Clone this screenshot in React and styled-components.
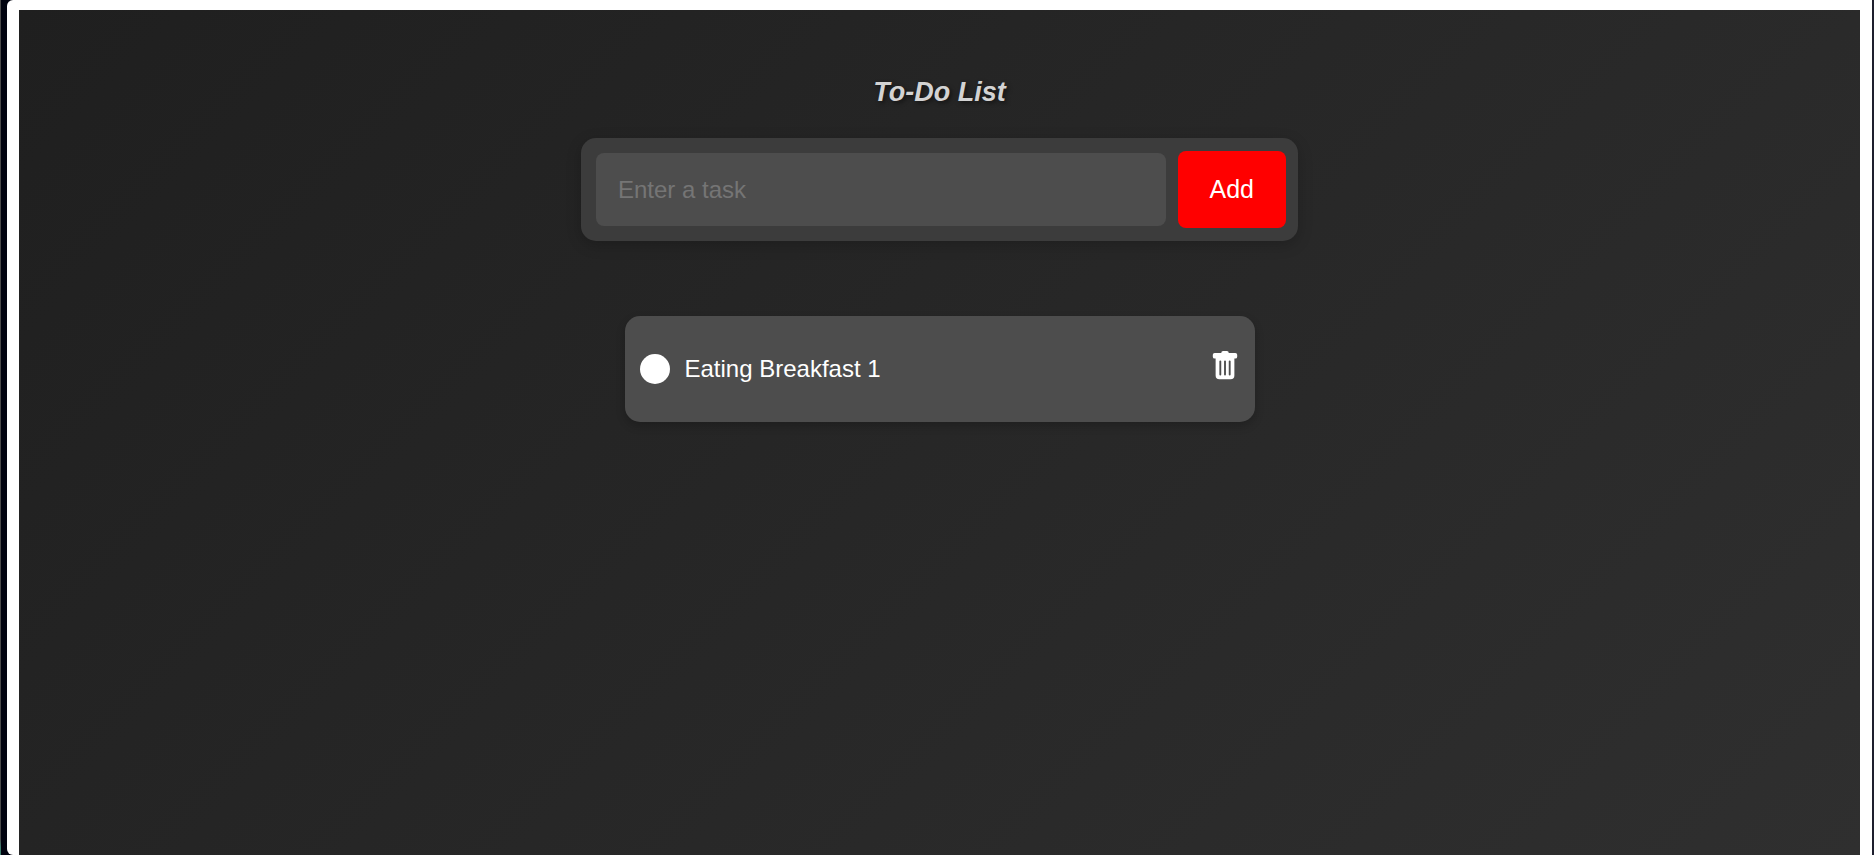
import React, { useState } from "react";
import styled, { createGlobalStyle } from "styled-components";
import { BsTrashFill } from "react-icons/bs";

const GlobalStyle = createGlobalStyle`
  *, *::before, *::after { box-sizing: border-box; }
  body {
    margin: 0;
    font-family: Arial, "Liberation Sans", sans-serif;
    color: #ffffff;
  }
`;

const Backdrop = styled.div`
  min-height: 100vh;
  display: flex;
  padding: 0 2px 0 6px;
  border-left: 1px solid #4a4a4a;
  border-image: linear-gradient(to bottom, #4a4a4a 98%, #3f7f70 99%) 1;
  background: linear-gradient(to right, #01030f 50%, #1e1f2e 50%);
`;

const Frame = styled.div`
  flex: 1;
  display: flex;
  padding: 10px 12px 0;
  background: #ffffff;
  border-radius: 6px 0 0 6px;
`;

const Page = styled.main`
  flex: 1;
  display: flex;
  flex-direction: column;
  align-items: center;
  padding: 66px 24px;
  background: linear-gradient(135deg, #1f1f1f, #2f2f2f);
`;

const Title = styled.h1`
  margin: 0;
  font-size: 27px;
  line-height: 32px;
  font-style: italic;
  color: #d3d3d3;
  text-shadow: 2px 2px 4px rgba(0, 0, 0, 0.5);
`;

const TaskForm = styled.form`
  width: 100%;
  max-width: 717px;
  display: flex;
  align-items: center;
  gap: 12px;
  margin-top: 30px;
  padding: 13px 12px 13px 15px;
  border-radius: 15px;
  background: #3c3c3c;
  box-shadow: 0 4px 15px rgba(0, 0, 0, 0.2);
`;

const TaskInput = styled.input`
  flex: 1;
  min-width: 0;
  height: 73px;
  padding: 0 22px;
  border: 0;
  border-radius: 8px;
  outline: 0;
  background: #4d4d4d;
  color: #ffffff;
  font: 24px Arial, "Liberation Sans", sans-serif;

  &::placeholder {
    color: #757575;
    opacity: 1;
  }
`;

const AddButton = styled.button`
  height: 77px;
  padding: 0 32px;
  border: 0;
  border-radius: 8px;
  background: #ff0000;
  color: #ffffff;
  font: 25px Arial, "Liberation Sans", sans-serif;
  cursor: pointer;
`;

const TaskList = styled.ul`
  width: 100%;
  max-width: 630px;
  display: flex;
  flex-direction: column;
  gap: 16px;
  margin: 75px 0 0;
  padding: 0;
  list-style: none;
`;

const TaskItem = styled.li`
  display: flex;
  align-items: center;
  min-height: 106px;
  padding: 0 15px;
  border-radius: 15px;
  background: #4d4d4d;
  box-shadow: 0 4px 10px rgba(0, 0, 0, 0.2);
`;

const TaskLabel = styled.label`
  flex: 1;
  display: flex;
  align-items: center;
  gap: 15px;
  font-size: 24px;
  line-height: 28px;
  text-decoration: ${({ $done }) => ($done ? "line-through" : "none")};
`;

const TaskCheck = styled.input`
  appearance: none;
  width: 30px;
  height: 30px;
  margin: 0;
  border-radius: 50%;
  background: #ffffff;
  cursor: pointer;

  &:checked { background: #ff0000; }
`;

const DeleteButton = styled.button`
  display: flex;
  margin-bottom: 6px;
  padding: 0;
  border: 0;
  background: none;
  color: #ffffff;
  font-size: 30px;
  cursor: pointer;
`;

export default function App() {
  const [tasks, setTasks] = useState([
    { id: 1, text: "Eating Breakfast 1", done: false },
  ]);
  const [draft, setDraft] = useState("");

  const addTask = (event) => {
    event.preventDefault();
    const text = draft.trim();
    if (!text) return;
    setTasks([...tasks, { id: Date.now(), text, done: false }]);
    setDraft("");
  };

  const toggleTask = (id) =>
    setTasks(tasks.map((t) => (t.id === id ? { ...t, done: !t.done } : t)));

  return (
    <>
      <GlobalStyle />
      <Backdrop>
        <Frame>
          <Page>
            <Title>To-Do List</Title>
            <TaskForm onSubmit={addTask}>
              <TaskInput
                type="text"
                aria-label="Enter a task"
                placeholder="Enter a task"
                value={draft}
                onChange={(event) => setDraft(event.target.value)}
              />
              <AddButton type="submit">Add</AddButton>
            </TaskForm>
            <TaskList>
              {tasks.map((task) => (
                <TaskItem key={task.id}>
                  <TaskLabel $done={task.done}>
                    <TaskCheck
                      type="checkbox"
                      checked={task.done}
                      onChange={() => toggleTask(task.id)}
                    />
                    {task.text}
                  </TaskLabel>
                  <DeleteButton
                    type="button"
                    aria-label="Delete task"
                    onClick={() => setTasks(tasks.filter((t) => t.id !== task.id))}
                  >
                    <BsTrashFill />
                  </DeleteButton>
                </TaskItem>
              ))}
            </TaskList>
          </Page>
        </Frame>
      </Backdrop>
    </>
  );
}
